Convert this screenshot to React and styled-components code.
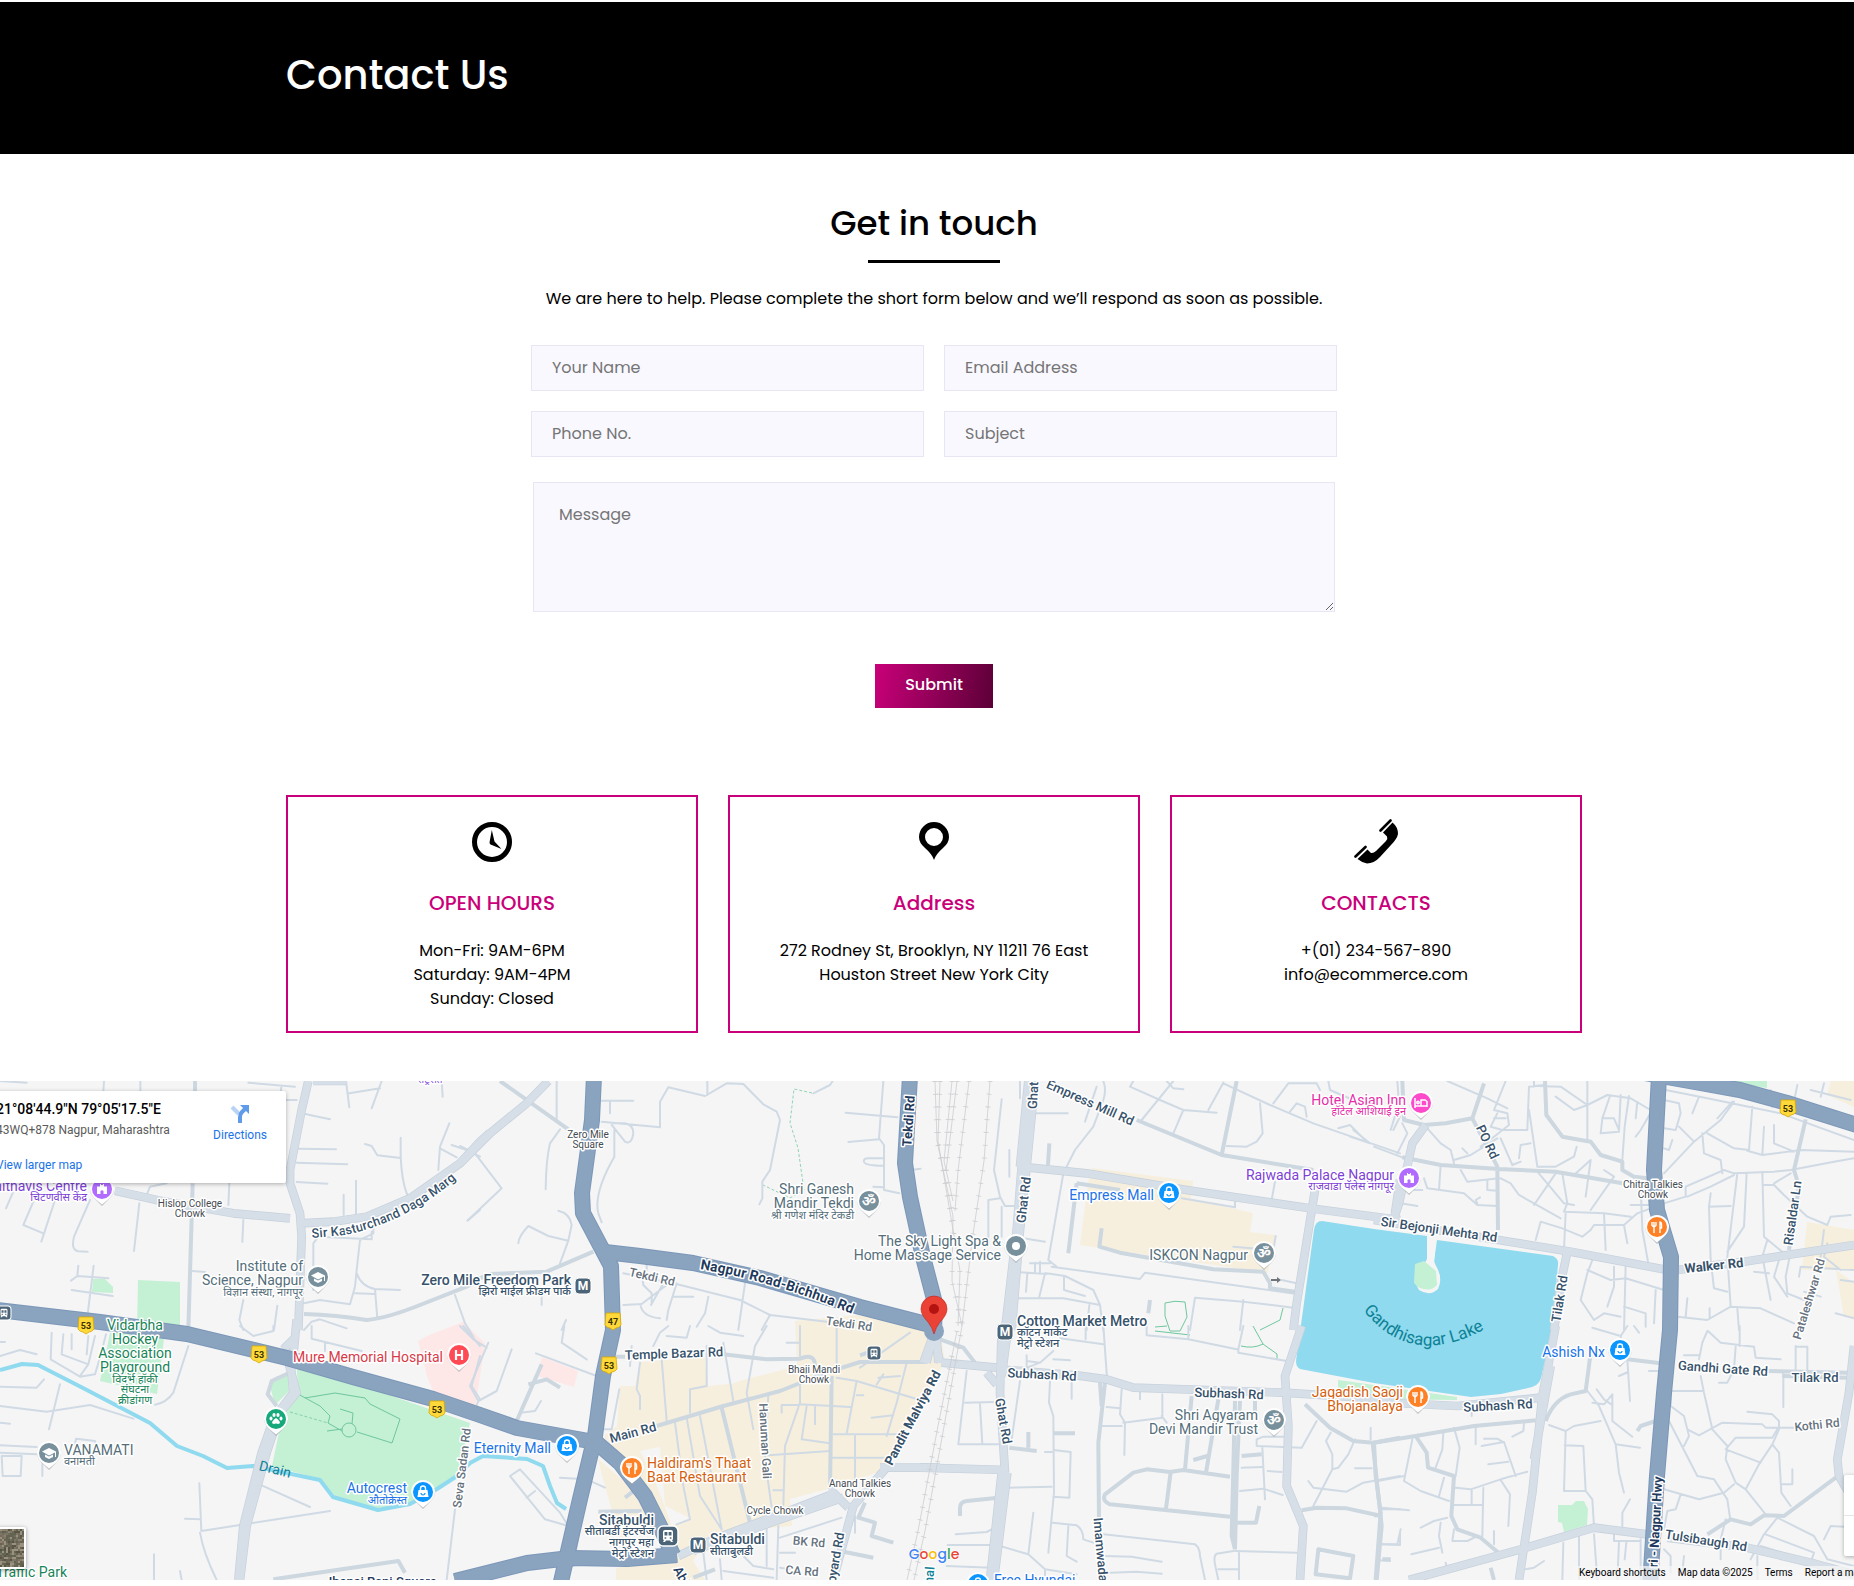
import React from "react";
import styled, { createGlobalStyle } from "styled-components";

const GlobalStyle = createGlobalStyle`
  *, *::before, *::after { box-sizing: border-box; }
  body { margin: 0; background: #fff; color: #000; font-family: Poppins, Inter, sans-serif; font-size: 16px; line-height: 24px; overflow-x: hidden; }
  h1, h2, h3, p { margin: 0; font-weight: 500; }
  a { color: inherit; text-decoration: none; }
`;

/* ---------- page ---------- */
const Page = styled.div`padding: 2px 0 6px;`;
const Container = styled.div`
  max-width: 1334px;
  margin: 0 auto;
  padding: 0 12px 0 26px;
  box-sizing: border-box;
`;
const Banner = styled.header`background: #000; color: #fff; padding: 49px 0 55px;`;
const BannerTitle = styled.h1`font-size: 40px; line-height: 48px;`;
const Section = styled.main`padding: 49px 0 48px;`;
const Heading = styled.h2`
  font-size: 34px;
  line-height: 40px;
  text-align: center;
  &::after { content: ""; display: block; width: 132px; height: 3px; margin: 17px auto 0; background: #000; }
`;
const Intro = styled.p`margin-top: 24px; font-weight: 400; text-align: center;`;
const Form = styled.form`
  max-width: 806px;
  margin: 34px auto 0;
  display: grid;
  grid-template-columns: 1fr 1fr;
  gap: 20px;
`;
const Input = styled.input`
  width: 100%;
  height: 46px;
  padding: 0 20px 2px;
  border: 1px solid #e6e6f5;
  border-radius: 0;
  background: #f9f8ff;
  font: 400 16px/24px Poppins, Inter, sans-serif;
  &::placeholder { color: #757575; opacity: 1; }
`;
const MessageRow = styled.div`grid-column: 1 / -1; padding: 5px 2px 0;`;
const Message = styled(Input)`
  display: block;
  height: 130px;
  padding: 20px 25px;
  resize: both;
`;
const SubmitRow = styled.div`grid-column: 1 / -1; display: flex; justify-content: center; margin-top: 32px;`;
const Submit = styled.button`
  width: 118px;
  height: 44px;
  padding: 0 0 2px;
  border: 0;
  color: #fff;
  background: linear-gradient(100deg, #c90079, #5c0037);
  font: 500 16px/24px Poppins, Inter, sans-serif;
  cursor: pointer;
`;
const Cards = styled.div`display: grid; grid-template-columns: repeat(3, 1fr); gap: 30px; margin-top: 87px;`;
const Card = styled.section`
  border: 2px solid #c9007a;
  padding: 22px 30px 20px;
  text-align: center;
`;
const CardIcon = styled.svg`display: block; width: 46px; height: 45px; margin: 0 auto;`;
const CardTitle = styled.h3`margin: 27px 0 24px; font-size: 20px; color: #c9007a;`;
const Line = styled.div``;

/* ---------- map chrome ---------- */
const MapFrame = styled.section`
  position: relative;
  height: 499px;
  overflow: hidden;
  background: #f5f5f5;
  font-family: Roboto, sans-serif;
`;
const MapSvg = styled.svg`display: block; width: 100%; height: 100%;`;
const PlaceCard = styled.div`
  position: absolute;
  top: 10px;
  left: -20px;
  width: 306px;
  height: 92px;
  padding: 9px 19px 9px 16px;
  display: flex;
  justify-content: space-between;
  background: #fff;
  border-radius: 2px;
  box-shadow: 0 1px 4px rgba(0, 0, 0, 0.3);
  font-size: 12px;
  line-height: 16px;
`;
const PlaceName = styled.div`font-size: 14px; line-height: 18px; font-weight: 500;`;
const PlaceAddress = styled.div`margin: 4px 0 19px; color: #5b5b5b;`;
const MapLink = styled.a`color: #1a73e8;`;
const Directions = styled(MapLink)`
  display: flex;
  flex-direction: column;
  align-items: center;
  gap: 3px;
  padding-top: 4px;
  svg { width: 20px; height: 20px; }
`;
const Satellite = styled.button`
  position: absolute;
  left: -14px;
  bottom: 11px;
  width: 40px;
  height: 42px;
  padding: 0;
  border: 2px solid #fff;
  border-radius: 2px;
  overflow: hidden;
  background: #6d675a;
  box-shadow: 0 1px 4px rgba(0, 0, 0, 0.4);
  svg { display: block; width: 100%; height: 100%; }
`;
const ZoomBox = styled.div`
  position: absolute;
  right: -30px;
  bottom: 24px;
  width: 40px;
  background: #fff;
  border-radius: 2px;
  box-shadow: 0 1px 4px rgba(0, 0, 0, 0.3);
`;
const ZoomButton = styled.button`
  display: block;
  width: 40px;
  height: 40px;
  border: 0;
  background: none;
  & + & { border-top: 1px solid #e6e6e6; height: 41px; }
`;
const MapFooter = styled.div`
  position: absolute;
  bottom: 0;
  left: calc(100% - 281px);
  display: flex;
  gap: 12px;
  padding: 0 6px;
  background: rgba(245, 245, 245, 0.75);
  font-size: 10px;
  line-height: 14px;
  white-space: nowrap;
`;
const Logo = styled.div`
  position: absolute;
  left: calc(50% + 7px);
  bottom: 16px;
  transform: translateX(-50%);
  font: 500 14px/20px Poppins, Inter, sans-serif;
  text-shadow: 0 0 2px #fff, 0 0 2px #fff, 0 0 2px #fff;
`;
const Letter = styled.span`color: ${(p) => p.$c};`;

/* ---------- map drawing ---------- */
const Label = styled.text`
  font-family: Roboto, "Noto Sans", "Noto Sans Devanagari", sans-serif;
  font-size: ${(p) => p.$s || 14}px;
  font-weight: ${(p) => p.$w || 400};
  fill: ${(p) => p.$c};
  stroke: ${(p) => (p.$plain ? "none" : "#fff")};
  stroke-width: 3px;
  stroke-linejoin: round;
  paint-order: stroke;
`;
const Glyph = styled.text`
  font-family: Roboto, "Noto Sans", sans-serif;
  font-weight: 700;
  fill: ${(p) => p.$c || "#fff"};
  font-size: ${(p) => p.$s || 12}px;
  text-anchor: middle;
`;

/* Each tile is drawn on a grid three times finer than the map. */
const tiles = [
  {
    x: 0, y: -11,
    minor: "M912,700L960,690L1050,703L1065,650L1070,600L1080,510L1120,490V475M940,660V520L955,500L1115,508V485M1070,610Q1085,650 1125,657L1200,660M1125,657L1132,745M1065,670L1125,672M905,130L990,148M895,236L1008,238M890,278L1042,283M890,336L982,341M1202,203V260Q1205,330 1220,370L1245,405M1095,222L1115,228L1132,256L1202,264M1348,160L1320,230L1315,300M1320,235L1370,262M1068,332V435M1031,374V435M1355,225L1400,240L1440,260M1440,420L1405,450M1038,33L1048,112M1048,70L1140,55M1145,33L1115,115M1325,33L1328,80M745,38L885,50M844,50L840,90L890,90M312,33L310,63M421,33V63M0,33L80,38M688,340L685,405M440,375L450,350L500,340M418,400L402,543M270,390L222,500Q212,540 235,544L263,545M730,450L727,516M578,603L615,606M100,395L70,465L130,490M165,390L124,515M40,365L18,415M235,587L232,618L325,625M232,618L213,632M281,587L262,740M215,660L338,678M730,690L718,750L730,780M832,707L822,780M912,780L935,755L960,748L1040,775M1365,675L1395,760L1420,800",
    mid: "M585,33V63M578,340L565,780M912,732Q1010,735 1100,750Q1160,745 1260,705L1400,650L1440,630",
    art: "M925,33L905,120L870,300V340L900,430L905,500L895,780M345,362L480,392L700,430L870,445M900,460L1000,455L1100,440L1230,385L1380,280L1440,215L1470,188M940,33H1040",
  },
  {
    x: 460, y: -11,
    minor: "M290,33V150M300,178L270,220Q258,270 257,358M0,228L45,250L125,355L22,452M425,92H520M450,95V130M425,155L600,172V95L625,52L735,78L800,40L850,42L910,103L950,125L960,150L930,300L907,335V385L898,403M742,33V75M455,165L495,215Q515,225 520,190Q520,165 495,160H455M463,180V260Q400,370 415,430L425,457M1060,70L1110,45L1118,33M1270,33L1257,205L1272,225V360L1318,370M1157,128L1312,142M1165,216L1257,208M1270,265H1225Q1210,265 1212,275Q1215,287 1270,287M1352,300L1382,296M1240,350L1272,352M175,520Q175,500 205,468L265,498L325,512M295,422Q330,430 335,465L325,512L300,580M560,575V600M545,610L550,645L575,670V700M610,640L573,705M490,705L545,702L620,645M490,610L640,640L840,690L930,735L1100,755M650,640L625,720L620,750M640,680H700M745,680L735,730L710,770M855,640L835,780M930,735L905,780M541,702Q545,740 600,745M318,750L305,780M245,680V705",
    mid: "M120,33L325,178M90,612L260,605L400,545M0,650L90,612",
    art: "M0,280L90,190L200,100L265,33",
  },
  {
    x: 920, y: -11,
    minor: "M245,88L222,300L240,380L255,408H280M205,520V390L240,385M268,240V320M245,410V500M340,130H443M300,35V85M550,33Q560,60 550,90L520,170L465,240L440,290M530,50L495,155M430,310L385,570L410,590M785,385L945,412V395M1065,335L1055,390M310,505L375,515M630,50L720,90L790,120L890,128M760,33L665,150M640,33L630,50M790,120L760,190M910,38L865,120M740,33L760,55L790,58M910,40L1050,105L1180,160L1440,250M1020,100L1028,190L1010,215L980,230L920,228M1060,100L1105,40H1190L1200,60M1110,125L1130,100L1155,110L1160,140M1255,175L1290,165L1340,215M1300,180L1350,220L1290,200M1420,180L1440,140M1225,33L1230,60L1300,90M395,590L660,627L675,608L1130,672M270,605L380,612M330,580H390M360,575V610M345,578V608M375,610L358,680M322,610L318,665M270,685L430,685L540,705M380,610L435,618L520,660L540,705L550,780M432,620V660L495,678M508,705L500,780M810,780L825,683L970,695L1120,713M970,690L960,780M1067,498L1060,540M940,530L1060,540M1085,630L1130,640",
    mid: "M388,220L384,285M470,340L445,550M470,340L600,360M545,475L538,530L600,548L880,598L1030,605L1050,640V655L1125,665M650,150L905,255L1180,300M950,33L905,255M690,690L685,730",
    art: "M325,33L300,290M345,33L320,290M305,290L290,480L255,780M320,290L300,480L275,780M300,290L500,310L800,360L1170,415L1440,450M1185,360L1130,700L1120,780M1440,330L1425,430",
  },
  {
    x: 1374, y: -11,
    minor: "M0,230L85,262M70,33L75,100L50,180M85,160L100,190L70,250M220,33L340,85L400,115M395,33L360,120L400,130L405,165L360,200L320,230M370,130L350,170L385,180H460L465,50L510,45M360,145H395M465,120L490,290H545L600,260L608,230M160,175L200,220L230,240L240,280M265,235L280,250M240,270L290,255L370,205M380,205L415,285L440,275M435,265L440,225L470,220M490,48L560,50L640,105L700,75L770,85L830,120M545,80L600,120L640,105V33M640,105V210M708,78L685,145L680,190L735,185L740,75M690,145H720L735,180M765,78L752,170L745,270M790,95L785,145M830,128L800,180L785,200M870,90L915,100L920,130L905,180L870,175M870,235L885,240L895,210M200,285L195,360M150,325L160,355L270,370L310,405L370,408M310,400L305,390L318,382M260,300L280,335L375,325M340,330V360L370,362M380,325L410,340L435,375L480,400L560,445M545,310L480,405M490,305L570,400L600,405M565,310L580,400L570,425L690,430L770,440M600,315L650,270L635,380M720,320L650,420M690,300L720,320M575,425L570,540M485,510L500,455L565,475L625,500L650,480L660,465L750,465L790,430L870,400L935,380V350L1050,300L1080,310M690,430L695,540M750,465L760,520M800,345L805,480L822,575M770,405H870M875,60L1000,85L1220,130L1440,210M975,80L955,130M1075,95L1030,145M870,310L960,215L1040,150L1080,95M960,215L915,170M985,190L990,250L1040,270L1045,310M1000,190L1080,235L1125,240L1135,110M1120,242L1165,255L1280,240L1440,245M1170,170L1165,255M1200,165V220L1260,245M1080,310L1200,305L1250,300L1380,275L1440,265M940,380L1010,350L1080,315M1010,370L1005,410L1070,408M1005,410L1010,570L1020,655L1060,665M1090,310L1060,560L1070,710M1118,310L1110,470L1060,545M1165,305L1170,500L1230,550M1170,345H1200L1230,375L1300,440L1360,465L1370,440L1430,435M1200,340L1250,310M1180,510L1165,560L1190,690M1140,605L1185,610M1250,545L1235,620L1240,670L1290,690M1215,570L1200,620L1240,680M1070,710L1160,715L1260,760M1090,715L1095,780M910,740L1000,750L1070,710M940,685L935,740M1007,715V745M1190,60L1195,110M1270,45L1260,95M1350,40L1340,80M1310,60L1430,90M655,570L640,610L620,690L660,750M755,585L750,780M640,600L710,630L755,625L870,660M720,590V650L700,710M660,750L690,730L740,740M750,710L815,730V770M845,660L840,760M80,400L130,408M100,330L120,360H145M1360,520L1350,560L1400,600M1275,620L1280,590L1440,600M1290,665L1340,680M1400,630L1440,635M1385,730L1440,745M480,33L480,50M1350,480L1340,560",
    mid: "M85,262L200,285L375,297L545,305L745,340M85,33L90,150L150,165L215,160L295,145L330,40M295,145L370,290L372,480M513,33L517,135L565,200L650,215L680,255L745,275V300L780,320L820,325M1295,148L1260,300L1275,350L1245,540",
    art: "M155,165L115,220L75,400L60,445M0,450L373,510L590,545L880,600M910,600L1110,575L1340,540L1440,525M580,545L560,640L540,780",
  },
  {
    x: 0, y: 245,
    minor: "M155,20L152,100L240,152L285,145L300,95L318,25M190,25L185,85L265,115L285,30M215,25V70M265,30L260,85M240,150L265,115M0,90L60,72L110,85M0,182L110,185L132,160M180,175L147,310M0,240L140,257L270,237L400,278M0,290L30,293M0,358L110,363M0,380L110,385M5,390H65L62,450H8ZM127,400V450M225,355L228,338L285,345L290,360M565,60L520,200Q500,230 465,236M598,472L604,615L990,555M555,578L602,580M785,478L930,543M600,620Q610,680 650,762M462,685V762M540,735L545,762M1365,550L1340,762M720,0L760,30L820,15V0M935,0V38L1085,75M975,50V75M1390,0L1440,60M1440,220L1415,180L1440,90M0,48H15",
    mid: "M820,760L1195,705L1215,740M870,140L815,165L803,205L830,240",
    art: "M890,-20L880,90M860,90L890,200L840,260L800,380L740,600L720,762M870,90L880,200L820,280L785,380L730,600L715,762M850,70L890,30",
  },
  {
    x: 460, y: 245,
    minor: "M85,50L30,180L55,225L45,250M0,0L40,40L80,65M55,225L110,195L155,70M313,0L305,50L380,100M228,82L410,150M180,260L225,255L243,225M300,455L380,460L435,485M150,450L255,580L325,600M150,450L180,430L300,560L325,600M200,515L225,495M478,190L455,310H430M515,60L510,120M540,110L530,190L540,210V250M605,100L620,285M740,60V180L690,190V260M790,50L820,225M920,0L885,60L860,200L880,310M1020,0V90M1020,180V230L975,360L970,540M925,205L920,300L915,400L935,545M1020,235L1170,243M965,260V237H1018M1040,240L1025,340L1110,352M1065,240V295M1130,0V140M1340,110L1310,230L1280,330M1130,155L1190,165L1380,222M1190,165L1160,322M1120,325H1310M1115,395H1280M1185,330V460M1190,208H1210M1235,275L1300,268M925,388L1110,375M645,290L670,480L690,580L650,595M680,275L720,510L785,610M720,270L785,610M940,493H970M620,30L680,35L690,0M580,60L600,20L625,0M745,0L780,20L850,30M980,50L1020,50M1255,155L1320,150M1270,145L1250,175M1200,125L1350,20M960,635L1145,575M740,762L730,680M955,600L950,762M780,700L785,762M790,735L940,755M960,725L990,730M960,680H1005M845,620L920,605V720M1185,570V620M850,690L880,720L940,730",
    mid: "M245,115L170,285M205,175L260,160L300,185M415,557L545,555M495,515L525,492M465,92H495M790,85L920,100L1020,98Q1065,80 1065,120M590,300L790,240L960,195L1100,140L1200,108L1400,108M1115,150L1110,490M785,245L870,590M1215,530L1195,575L1245,590L1235,630L1300,650M1140,690V675L1240,695M1130,700L1140,675M1250,70L1200,88M700,755L765,730",
    art: "M655,690L760,640L960,565L1130,500M700,675L960,580L1150,515M1260,425H1440M1275,430L1180,540L1120,762M1110,490L1165,545M1390,110L1415,40M1440,110L1425,40M330,720L370,480",
  },
  {
    x: 920, y: 245,
    minor: "M320,88V120M140,135L115,355L235,355M135,230L220,228M180,235L187,355M300,165L275,340M390,165L387,230L400,270L402,500L385,680M375,378H395M400,372L452,378L448,515L400,512M265,485L395,482M455,170V218M400,100L450,103M320,105L360,110L400,75M360,110L320,125M420,37L550,55M550,0L562,170M497,0V40M605,190L600,265L615,290L613,387M560,243L600,247M727,205V275L610,290M548,300L605,300M740,290L725,270M1010,360V340L1030,332H1100M1010,360L1145,365L1190,285M965,425L1025,423M1027,365L1035,520M1043,435L1085,438M960,495L1030,488L1088,507M107,625L200,618L225,605M83,657H215M80,720L215,725M240,660L325,685L375,730L470,745M340,560L325,685M375,730V762M398,590L470,598Q490,610 490,640L520,650M445,600L440,690L470,707M550,625L825,655Q840,665 840,690L855,762M555,690L635,692L725,707M570,740L650,737L725,743M945,675L1130,680M940,675L890,683Q880,690 885,715L895,762M895,730H955M957,675V762M1232,320L1218,345L1237,385V430L1180,540M1237,430L1255,425L1285,385L1305,340M1165,465L1180,485L1280,497L1330,470L1440,450M1305,427H1355M1352,305V340M1385,550H1440M1385,655L1440,657V620M1375,703L1410,705M680,0V28L805,40L950,70H955L970,0M955,70V80L1100,105M805,0V40M660,190V220",
    mid: "M60,40L130,65L165,110M400,322H465M325,318V365M268,365L350,375M815,210L795,430M895,220L858,440M820,402L862,390M752,438L738,548M1005,225V260M965,390L1025,385M1018,540L1008,590H945M120,570V545Q120,528 140,525L235,515M1195,670L1300,690L1290,757L1187,745ZM1155,235L1230,305L1300,345L1360,350L1440,335M1145,553L1190,545L1280,547L1385,570M1358,350L1385,600L1370,762M555,170L535,350L537,580M540,170L545,240M930,572L570,535Q545,525 555,505L640,440L680,430L750,438L790,432L930,452M945,225L935,630L945,670M960,225L950,450L945,670",
    art: "M65,110L230,125M20,110L35,40M55,110L50,40M200,140L230,175M235,130L470,148L560,160L640,185L1090,200L1440,222M245,0L240,200L255,440M265,0L245,150M0,425L265,432M262,440L222,762M245,440L210,762M1145,0L1095,150L1105,300L1100,480L1150,600L1140,762",
  },
  {
    x: 1374, y: 245,
    minor: "M115,340L90,465L140,495L225,525M12,465L90,450M208,320L205,370L185,425M240,305L257,365L245,450M305,300V355M323,360L390,348L425,450M330,338H370L390,350M343,415L403,407M460,437L380,460L290,490L245,485M293,490V535M240,537H325M328,485L325,630M380,462L408,505L403,600M210,455L195,510M140,605L180,585L220,575M200,590L195,630L205,680M112,685L195,665M240,610L235,645H280L310,630M360,615V655M25,545L105,553M20,655H70L80,610M450,290L448,315L415,332M525,297L575,315L570,495H635L628,360L572,358M575,315L600,300L680,285M640,195L675,240L725,355L735,440L750,500M725,355L798,365M668,190L690,220L712,235M655,230L690,235L715,205V285L775,332M635,495L655,520L660,600M768,520L745,560V600M890,195H985M980,150L990,200L1015,310L1060,360L1055,400L1085,470L1115,490L1175,565M890,200V240L930,270L945,330L930,360M885,285L970,450L1020,460L1060,520L1068,575M940,310L975,328L1045,290L1165,295L1175,305H1260M1120,257L1195,265L1215,285V310L1195,355L1155,415L1115,490M1210,310L1195,335H1085L1055,370L1160,410M1195,355L1215,380L1222,500L1250,540M1255,430V475H1222M870,490L975,520L1050,500L1080,475M920,505L905,550L880,555L870,610M1002,15L1040,50L1140,62L1145,95L1220,100M1000,15L985,50L975,100M930,88H975M1097,0V60M1085,62L1080,130L1060,170H1035M1265,60V130M1265,62H1300V130M1228,140V243M655,5L740,30L760,0M740,30L745,60M760,100L768,225M735,150L762,138M720,625V645H800M735,650L730,762M757,650L752,700M800,640V762M780,0L795,20M615,630V762M660,625L670,762M568,650L565,762M455,730L480,725L510,705M215,710L220,730M1210,575L1170,625L1130,700M1210,575L1320,630L1360,700M1175,625L1320,680L1310,710M1160,660L1290,700M1055,580L1040,640V700M1350,640L1370,600L1410,602M1150,690V762M870,670L890,690V740M930,690L925,740M825,135H850M1360,700L1440,720M293,250V270",
    mid: "M0,350L125,330L300,300L485,283M515,285Q540,220 590,205L635,195L650,80M760,100L860,112M790,315L800,300L845,285M1180,135L1420,140M1225,150L1420,155M125,330L158,380L162,425L240,450L232,570L250,610L320,635L385,690M0,350L5,450L20,560L5,762M1385,455L1230,570L1170,568L1130,595L1070,580L1000,625M350,725L360,762M25,700H50M0,568H15",
    art: "M545,0L505,210L475,500L435,762M0,228L250,240L500,215M105,762L440,670L660,605L820,625M880,635L1120,665L1310,710L1440,745M1440,60L1425,200L1390,400L1395,450L1430,510M530,120L480,400",
  },
];

const highways = [
  "M-10,228L100,241L187,253L287,277L353,296L433,318L480,334L517,347L600,362",
  "M594,-5L592,39L582,112L583,132L611,185L613,249L603,295L595,355L580,418L560,505",
  "M605,171L640,175L693,182L760,197L860,226L934,245",
  "M910,-5L905,82L910,116L923,176L935,222L934,250",
  "M597,362L620,382L645,415L660,445L673,474M455,500L527,482L570,477L627,478L677,474",
  "M1659,-5L1654,89L1657,129L1671,176L1670,249L1664,312L1657,395L1650,505",
  "M1645,-8L1700,2L1740,9L1787,22L1860,45",
];

const areas = [
  ["#c4f0d4", "M138,199L180,201L180,245L165,250L157,313L100,300L110,252L137,250ZM93,198L105,198L113,206V212L92,211ZM297,288L380,311L470,342L457,395L410,423L378,427L337,417L320,398L272,385L283,332L298,312ZM270,305L277,295L288,295L289,310L275,324ZM1558,424H1572L1576,420H1584L1588,428L1587,444L1564,451L1562,442L1558,441ZM1727,0H1767V7L1734,2ZM1338,299L1374,304L1457,316V319L1374,318L1338,314Z"],
  ["#fde8e7", "M418,260L427,255L463,241L485,262L475,328L435,315L427,295ZM542,276L578,290L574,306L537,295Z"],
  ["#f7efdd", "M1092,87L1193,100L1191,118L1253,132L1250,151L1275,154L1268,192L1080,164L1088,102ZM604,355L617,345L620,305H635L640,281L705,276L708,305L728,303L797,285L795,240L880,232L940,250L945,280L885,388L850,402L790,418L792,445L710,452L690,485L672,472L660,440L635,400ZM598,378L650,422L657,445L620,458L605,405ZM616,487L690,475L705,499H616ZM1807,141L1854,149V189L1802,189ZM1836,189L1854,202V237L1844,236ZM1831,0H1854V26L1827,14Z"],
  ["#f5f5f5", "M640,370L660,366L665,425L690,437L672,445L655,400ZM729,304L727,279H740V300Z"],
  ["#8fdaee", "M1314,149Q1315,140 1322,140L1374,148L1427,155V178L1420,190L1428,208L1440,196L1434,180L1437,159L1553,175Q1559,178 1558,184L1552,250L1541,297Q1539,305 1528,307L1501,313L1471,316L1374,302L1300,288Q1296,286 1296,280Z"],
  ["#f5f5f5", "M1428,158H1436L1434,182Q1444,196 1438,208Q1430,216 1419,209Q1411,196 1420,184L1428,180Z"],
  ["#c4f0d4", "M1415,183L1424,180L1436,190L1437,204Q1430,212 1418,206L1414,202Z"],
];

const SL = "#546e7a", NV = "#37526b", BL = "#1a73e8", PU = "#7d3fd6", PK = "#e62ea8", RD = "#d93a48", GR = "#188458", OR = "#d5600c", DK = "#444b52", TE = "#0e8297", HW = "#1f3a5c", RG = "#66727e";

/* x, anchor, colour, weight, lines of [text, baseline, size] */
const places = [
  [87, "end", PU, 400, ["Chithavis Centre", 110], ["चिटणवीस केंद्र", 120, 11]],
  [303, "end", SL, 400, ["Institute of", 190], ["Science, Nagpur", 204], ["विज्ञान संस्था, नागपूर", 215, 11]],
  [571, "end", NV, 500, ["Zero Mile Freedom Park", 204], ["झिरो माईल फ्रीडम पार्क", 214, 11]],
  [854, "end", SL, 400, ["Shri Ganesh", 113], ["Mandir Tekdi", 127], ["श्री गणेश मंदिर टेकडी", 138, 11]],
  [1001, "end", SL, 400, ["The Sky Light Spa &", 165], ["Home Massage Service", 179]],
  [1154, "end", BL, 400, ["Empress Mall", 119]],
  [1248, "end", SL, 400, ["ISKCON Nagpur", 179]],
  [1394, "end", PU, 400, ["Rajwada Palace Nagpur", 99], ["राजवाडा पॅलेस नागपूर", 109, 11]],
  [1406, "end", PK, 400, ["Hotel Asian Inn", 24], ["हॉटेल आशियाई इन", 34, 11]],
  [443, "end", RD, 400, ["Mure Memorial Hospital", 281]],
  [407, "end", BL, 400, ["Autocrest", 412], ["औतोक्रेस्त", 423, 11]],
  [551, "end", BL, 400, ["Eternity Mall", 372]],
  [1605, "end", BL, 400, ["Ashish Nx", 276]],
  [1403, "end", OR, 400, ["Jagadish Saoji", 316], ["Bhojanalaya", 330]],
  [1258, "end", SL, 400, ["Shri Agyaram", 339], ["Devi Mandir Trust", 353]],
  [654, "end", NV, 500, ["Sitabuldi", 444], ["सीताबर्डी इंटरचेंज", 454, 11], ["नागपुर महा", 465, 11], ["मेट्रो स्टेशन", 476, 11]],
  [1017, "start", NV, 500, ["Cotton Market Metro", 245], ["कॉटन मार्केट", 255, 11], ["मेट्रो स्टेशन", 266, 11]],
  [64, "start", SL, 400, ["VANAMATI", 374], ["वनामती", 384, 11]],
  [647, "start", OR, 400, ["Haldiram's Thaat", 387], ["Baat Restaurant", 401]],
  [710, "start", NV, 500, ["Sitabuldi", 463], ["सीताबुलडी", 474, 11]],
  [67, "end", GR, 400, ["Traffic Park", 496]],
  [994, "start", BL, 400, ["Free Hyundai", 504]],
  [325, "start", HW, 500, ["Jhansi Rani Square", 505, 13]],
  [135, "middle", GR, 400, ["Vidarbha", 249], ["Hockey", 263], ["Association", 277], ["Playground", 291], ["विदर्भ हॉकी", 302, 11], ["संघटना", 312, 11], ["क्रीडांगण", 323, 11]],
  [190, "middle", DK, 400, ["Hislop College", 126, 10], ["Chowk", 136, 10]],
  [588, "middle", DK, 400, ["Zero Mile", 57, 10], ["Square", 67, 10]],
  [814, "middle", DK, 400, ["Bhaji Mandi", 292, 10], ["Chowk", 302, 10]],
  [860, "middle", DK, 400, ["Anand Talkies", 406, 10], ["Chowk", 416, 10]],
  [775, "middle", DK, 400, ["Cycle Chowk", 433, 10]],
  [1653, "middle", DK, 400, ["Chitra Talkies", 107, 10], ["Chowk", 117, 10]],
];

/* text, x, y, angle, colour, weight */
const roads = [
  ["Tekdi Rd", 909, 40, -86, HW, 700], ["Tekdi Rd", 652, 196, 13, RG, 500], ["Tekdi Rd", 849, 243, 8, RG, 500],
  ["Ghat Rd", 1034, 5, -87, NV, 500], ["Ghat Rd", 1024, 119, -83, NV, 500], ["Ghat Rd", 1003, 340, 80, NV, 500],
  ["Empress Mill Rd", 1090, 22, 24, NV, 500], ["Sir Bejonji Mehta Rd", 1439, 149, 8, NV, 500], ["PO Rd", 1487, 61, 65, NV, 500],
  ["Walker Rd", 1714, 185, -6, NV, 700], ["Risaldar Ln", 1793, 132, -82, NV, 500], ["Pataleshwar Rd", 1809, 218, -73, RG, 500],
  ["Tilak Rd", 1560, 218, -81, NV, 500], ["Gandhi Gate Rd", 1723, 288, 4, NV, 500], ["Tilak Rd", 1815, 297, 0, NV, 500],
  ["Kothi Rd", 1817, 344, -6, RG, 500], ["Tulsibaugh Rd", 1706, 460, 9, NV, 500], ["Subhash Rd", 1498, 325, -3, NV, 500],
  ["Subhash Rd", 1229, 313, 2, NV, 500], ["Subhash Rd", 1042, 294, 3, NV, 500], ["ri - Nagpur Hwy", 1656, 441, -87, HW, 700],
  ["Imamwada Rd", 1101, 478, 85, NV, 500], ["Temple Bazar Rd", 674, 273, -2, NV, 500], ["Main Rd", 633, 352, -15, NV, 500],
  ["Hanuman Gali", 765, 360, 87, RG, 500], ["Pandit Malviya Rd", 913, 337, -62, NV, 700], ["BK Rd", 809, 461, 5, RG, 500],
  ["CA Rd", 802, 490, 4, RG, 500], ["Cappyard Rd", 834, 488, -80, NV, 500], ["Abhyankar", 691, 514, 62, HW, 500],
  ["Seva Sadan Rd", 462, 387, -83, RG, 500], ["Drain", 275, 389, 14, TE, 400], ["Canal", 929, 502, -85, TE, 500],
];

const shields = [["53", 86, 244], ["53", 259, 273], ["53", 437, 328], ["47", 613, 240], ["53", 609, 284], ["53", 1788, 27]];

const C = { slate: "#78909c", blue: "#0a95ff", purple: "#b26bff", pink: "#fc4acb", orange: "#ff8126", green: "#17a97b", red: "#ff4a55" };
const pins = [
  [102, 108, C.purple, "fort"], [318, 196, C.slate, "cap"], [869, 120, C.slate, "om"], [1016, 165, C.slate, "dot"],
  [1169, 112, C.blue, "bag"], [1264, 172, C.slate, "om"], [1421, 22, C.pink, "bed"], [1409, 97, C.purple, "fort"],
  [1657, 146, C.orange, "food"], [276, 338, C.green, "paw"], [49, 372, C.slate, "cap"], [459, 274, C.red, "H"],
  [423, 411, C.blue, "bag"], [567, 365, C.blue, "bag"], [632, 387, C.orange, "food"], [1274, 339, C.slate, "om"],
  [978, 503, C.blue, "bag"], [1620, 269, C.blue, "bag"], [1418, 316, C.orange, "food"],
];

function PinGlyph({ kind, color }) {
  switch (kind) {
    case "fort":
      return <path fill="#fff" fillRule="evenodd" d="M-5,-2.500H-2V-5H-1V-4H1V-5H2V-2.500H5V5H-5ZM-1.500,5V2Q0,0.500 1.500,2V5Z" />;
    case "cap":
      return <path fill="#fff" d="M0,-5L7,-1.5V4H6V-0.5L0,2.5L-7,-1.5ZM-4,1.5L0,3.6L4,1.5V4L0,6L-4,4Z" />;
    case "om":
      return <Glyph $s={14} y="5">ॐ</Glyph>;
    case "dot":
      return <circle r="4" fill="#fff" />;
    case "bag":
      return (
        <g>
          <path fill="#fff" d="M-4.5,-2H4.5L5.5,5H-5.5Z" />
          <path fill="none" stroke="#fff" strokeWidth="1.4" d="M-2.5,-2V-3.5A2.5,2.5 0 0 1 2.5,-3.5V-2" />
          <path fill="none" stroke={color} strokeWidth="1.2" d="M-2,1A2,2 0 0 0 2,1" />
        </g>
      );
    case "bed":
      return (
        <g fill="none" stroke="#fff" strokeWidth="1.5">
          <path d="M-6,-5V5M-6,3H6M6,4V-1.5L4,-3H0V3" />
          <circle cx="-3" cy="-0.5" r="1.2" />
        </g>
      );
    case "food":
      return <path stroke="#fff" strokeWidth="1.4" fill="none" d="M-3,6V-5M-5,-5V-1.5L-3,0L-1,-1.5V-5M3,6V-5Q5,-5 4.5,1H3" />;
    case "paw":
      return (
        <g fill="#fff">
          <ellipse cx="-5" cy="-0.5" rx="1.5" ry="2" /><ellipse cx="-2" cy="-4" rx="1.6" ry="2" />
          <ellipse cx="2" cy="-4" rx="1.6" ry="2" /><ellipse cx="5" cy="-0.5" rx="1.5" ry="2" />
          <path d="M0,-1Q2,0 4,3Q4,6 0,4.6Q-4,6 -4,3Q-2,0 0,-1Z" />
        </g>
      );
    default:
      return <path stroke="#fff" strokeWidth="2.2" d="M-3,-5V5M3,-5V5M-3,0H3" />;
  }
}

function Layer({ kind, color, width }) {
  return (
    <g fill="none" stroke={color} strokeWidth={width} strokeLinejoin="round" strokeLinecap={kind === "minor" ? "round" : "butt"}>
      {tiles.map((t, i) => (
        <path key={i} d={t[kind]} transform={`translate(${t.x} ${t.y}) scale(.33333)`} />
      ))}
    </g>
  );
}

function TrainSquare({ x, y, size }) {
  return (
    <g transform={`translate(${x} ${y}) scale(${size / 20})`}>
      <rect x="-10" y="-10" width="20" height="20" rx="5" fill="#4b6478" stroke="#fff" strokeWidth="1.5" />
      <path fill="#fff" fillRule="evenodd" d="M-5,-4Q-5,-6 -3,-6H3Q5,-6 5,-4V3Q5,4 4,4L5,6H3L2,4.500H-2L-3,6H-5L-4,4Q-5,4 -5,3ZM-3.500,-4V-0.500H-0.600V-4ZM0.600,-4V-0.500H3.500V-4ZM-3.400,1.200V2.800H-1.800V1.200ZM1.800,1.200V2.800H3.400V1.200Z" />
    </g>
  );
}

const rails = [
  "M935,0L937,60L953,135L952,200L962,245", "M940,0L938,60L960,190L958,245", "M952,0L944,80L953,120", "M957,0L946,90",
  "M969,0L958,90L955,130", "M990,0L984,80L972,160L962,245L945,340L925,450L914,499", "M957,250L938,345L918,450L907,499",
];

function MapDrawing() {
  return (
    <MapSvg viewBox="0 0 1854 499" preserveAspectRatio="xMidYMid slice" role="img" aria-label="Map of Nagpur">
      <defs>
        <path id="kasturchand" d="M312,157L345,154Q420,138 475,80" />
        <path id="bichhua" d="M700,188Q785,202 875,243" />
        <path id="lake" d="M1358,222Q1408,294 1492,244" />
      </defs>
      {areas.map(([fill, d], i) => <path key={i} fill={fill} d={d} />)}
      <path fill="none" stroke="#8fdaee" strokeWidth="4" strokeLinejoin="round" d="M0,289L22,283L38,284L83,307L150,342L177,365L203,375L227,387L253,385L320,399L333,416L378,429L410,423L437,408L457,395L470,382L483,375L527,378L543,385L550,405L557,422L566,428" />
      <g fill="none" stroke="#6ec79f" strokeWidth="1">
        <path d="M298,313L320,325L330,335L328,342L342,350M305,317L335,312L365,317L370,323L400,338L392,362L357,351M340,328L353,332L352,343M327,350L342,348M1165,222Q1175,219 1185,221L1187,236L1180,250H1170L1165,235ZM1155,246L1167,245M1155,250L1190,254M1260,249L1280,239L1283,227M1241,265Q1253,268 1263,263L1277,273V278M1253,245L1263,263" />
        <circle cx="349" cy="349" r="7" />
        <path strokeDasharray="3 2" opacity="0.75" d="M290,331L328,342M812,12L794,8L790,42L798,67L804,109L790,117L763,104" />
      </g>
      <Layer kind="minor" color="#d0dae4" width={6} />
      <Layer kind="mid" color="#ccd7e0" width={12} />
      <Layer kind="art" color="#c6d1dc" width={26} />
      <Layer kind="art" color="#d6dee7" width={22} />
      <g fill="none" stroke="#cccdd0">
        {rails.map((d) => <path key={d} d={d} strokeWidth="0.8" />)}
        {rails.map((d) => <path key={d} d={d} strokeWidth="5" strokeDasharray="0.8 12" />)}
      </g>
      {["#7b97b8", "#8aa3bf"].map((c, k) => (
        <g key={c} fill="none" stroke={c} strokeWidth={k ? 14 : 16} strokeLinejoin="round">
          {highways.map((d) => <path key={d} d={d} />)}
        </g>
      ))}
      <circle cx="934" cy="250" r="10" fill="#8aa3bf" />
      {roads.map(([t, x, y, a, c, w], i) => (
        <Label key={i} $c={c} $w={w} $s={c === RG ? 12 : t === "Drain" ? 14 : 13} $plain={t === "Drain"} textAnchor="middle" transform={`translate(${x} ${y}) rotate(${a})`} dy="4">{t}</Label>
      ))}
      <Label $c={NV} $w={500} $s={13}><textPath href="#kasturchand">Sir Kasturchand Daga Marg</textPath></Label>
      <Label $c={HW} $w={700} $s={14}><textPath href="#bichhua">Nagpur Road-Bichhua Rd</textPath></Label>
      <Label $c={TE} $s={17} $plain><textPath href="#lake" startOffset="50%" textAnchor="middle">Gandhisagar Lake</textPath></Label>
      <Label $c={PU} $s={10} x="430" y="2" textAnchor="middle">राष्ट्रसंत</Label>
      {shields.map(([n, x, y]) => (
        <g key={n + x} transform={`translate(${x} ${y})`}>
          <path fill="#ffd83a" stroke="#d9a800" strokeWidth="0.8" d="M-7,-8H7L8,4Q6,7 3,7L0,9L-3,7Q-6,7 -8,4Z" />
          <Glyph $c="#3a3300" $s={9} y="4">{n}</Glyph>
        </g>
      ))}
      {places.map(([x, anchor, c, w, ...lines]) =>
        lines.map(([t, y, s]) => <Label key={t + y} x={x} y={y} textAnchor={anchor} $c={c} $w={w} $s={s}>{t}</Label>)
      )}
      {pins.map(([x, y, c, kind]) => (
        <g key={x} transform={`translate(${x} ${y})`}>
          <path d="M-12,0.800A12,12 0 1 1 12,0.800Q11.500,6 6,11L0,17L-6,11Q-11.500,6 -12,0.800Z" fill="#9aa0a6" opacity="0.6" />
          <path d="M-12,0A12,12 0 1 1 12,0Q11.500,6 6,10.500L0,15.500L-6,10.500Q-11.500,6 -12,0Z" fill="#fff" />
          <circle r="10" fill={c} />
          <PinGlyph kind={kind} color={c} />
        </g>
      ))}
      {[[583, 205], [1005, 251], [698, 464]].map(([x, y]) => (
        <g key={x} transform={`translate(${x} ${y})`}>
          <rect x="-8" y="-8" width="16" height="16" rx="4" fill="#4b6478" stroke="#fff" strokeWidth="1" />
          <Glyph $s={12} y="4">M</Glyph>
        </g>
      ))}
      <TrainSquare x={4} y={232} size={14} />
      <TrainSquare x={874} y={272} size={14} />
      <TrainSquare x={668} y={455} size={20} />
      <path fill="#70757a" d="M1271,198H1277V196L1281,199L1277,202V200H1271Z" />
      <path fill="#ea4335" stroke="#c5221f" strokeWidth="0.600" d="M934,253Q932,246 928,241Q921,234 921,228A13,13 0 1 1 947,228Q947,234 940,241Q936,246 934,253Z" />
      <circle cx="934" cy="228" r="5" fill="#b31412" />
    </MapSvg>
  );
}

/* Aerial thumbnail: a small field of earth-coloured cells. */
const specks = Array.from({ length: 18 * 19 }, (_, i) => ({
  x: (i % 18) * 2,
  y: Math.floor(i / 18) * 2,
  c: ["#7d7666", "#565546", "#8a8170", "#5f6450", "#756b5c", "#696352", "#9b917f"][Math.floor(Math.abs(Math.sin(i * 12.9898) * 43758)) % 7],
}));

const brand = [["G", "#4285f4"], ["o", "#ea4335"], ["o", "#fbbc04"], ["g", "#4285f4"], ["l", "#34a853"], ["e", "#ea4335"]];

const fields = [["name", "Your Name", "text"], ["email", "Email Address", "email"], ["phone", "Phone No.", "tel"], ["subject", "Subject", "text"]];

export default function App() {
  return (
    <>
      <GlobalStyle />
      <Page>
        <Banner>
          <Container><BannerTitle>Contact Us</BannerTitle></Container>
        </Banner>
        <Section>
          <Container>
            <Heading>Get in touch</Heading>
            <Intro>We are here to help. Please complete the short form below and we’ll respond as soon as possible.</Intro>
            <Form onSubmit={(e) => e.preventDefault()}>
              {fields.map(([id, label, type]) => (
                <Input key={id} id={id} name={id} type={type} placeholder={label} aria-label={label} />
              ))}
              <MessageRow><Message as="textarea" name="message" placeholder="Message" aria-label="Message" /></MessageRow>
              <SubmitRow><Submit type="submit">Submit</Submit></SubmitRow>
            </Form>
            <Cards>
              <Card>
                <CardIcon viewBox="0 0 46 45" aria-hidden="true">
                  <circle cx="23" cy="23" r="17.500" fill="none" stroke="#000" strokeWidth="5" />
                  <path d="M22.800,11L25.500,22.500L32.500,30L21.500,25.500Q20.300,24.500 20.600,23Z" />
                </CardIcon>
                <CardTitle>OPEN HOURS</CardTitle>
                <Line>Mon-Fri: 9AM-6PM</Line>
                <Line>Saturday: 9AM-4PM</Line>
                <Line>Sunday: Closed</Line>
              </Card>
              <Card>
                <CardIcon viewBox="0 0 46 45" aria-hidden="true">
                  <path fillRule="evenodd" d="M23,41Q21,35 14,29Q8,24 8,18A15,15 0 0 1 38,18Q38,24 32,29Q25,35 23,41ZM23,9A9,9 0 1 0 23,27A9,9 0 0 0 23,9Z" />
                </CardIcon>
                <CardTitle>Address</CardTitle>
                <Line>272 Rodney St, Brooklyn, NY 11211 76 East Houston Street New York City</Line>
              </Card>
              <Card>
                <CardIcon viewBox="0 0 46 45" aria-hidden="true">
                  <path d="M39.500,3.500Q45,8 45,15Q44,20 38,26L27,38Q21,44.500 14,44.500Q8,43 4.500,40L14.500,30.500L18,34Q20.500,34.500 23,32L33,22Q35,19.500 34,17.500L30,13.500Z" />
                  <path fill="none" stroke="#000" strokeWidth="2.600" strokeLinecap="round" d="M27.500,11.500L37.500,1.500M2.500,37.500L12.500,28" />
                </CardIcon>
                <CardTitle>CONTACTS</CardTitle>
                <Line><a href="tel:+01234567890">+(01) 234-567-890</a></Line>
                <Line><a href="mailto:info@ecommerce.com">info@ecommerce.com</a></Line>
              </Card>
            </Cards>
          </Container>
        </Section>
        <MapFrame>
          <MapDrawing />
          <PlaceCard>
            <div>
              <PlaceName>21°08'44.9"N 79°05'17.5"E</PlaceName>
              <PlaceAddress>43WQ+878 Nagpur, Maharashtra</PlaceAddress>
              <MapLink href="#map">View larger map</MapLink>
            </div>
            <Directions href="#directions">
              <svg viewBox="0 0 20 20" aria-hidden="true">
                <path fill="none" stroke="#b9d3f6" strokeWidth="4" d="M2,3L9,10" />
                <path fill="none" stroke="#5f9be8" strokeWidth="4" d="M10,19V13Q10,10 12,8L15,5" />
                <path fill="#5f9be8" d="M10,1H19V10Z" />
              </svg>
              Directions
            </Directions>
          </PlaceCard>
          <Satellite aria-label="Show satellite imagery">
            <svg viewBox="0 0 36 38" aria-hidden="true">
              {specks.map((s, i) => <rect key={i} x={s.x} y={s.y} width="2" height="2" fill={s.c} />)}
            </svg>
          </Satellite>
          <ZoomBox>
            <ZoomButton aria-label="Zoom in" />
            <ZoomButton aria-label="Zoom out" />
          </ZoomBox>
          <Logo>{brand.map(([l, c], i) => <Letter key={i} $c={c}>{l}</Letter>)}</Logo>
          <MapFooter>
            <a href="#shortcuts">Keyboard shortcuts</a>
            <span>Map data ©2025</span>
            <a href="#terms">Terms</a>
            <a href="#report">Report a map error</a>
          </MapFooter>
        </MapFrame>
      </Page>
    </>
  );
}
